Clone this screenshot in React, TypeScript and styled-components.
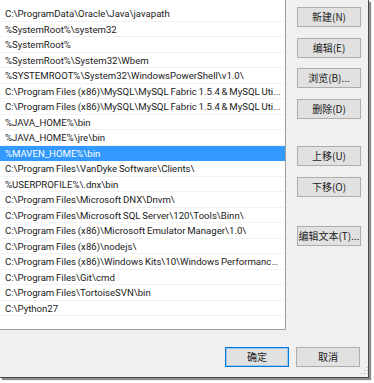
import React from "react";
import styled, { createGlobalStyle } from "styled-components";

const GlobalStyle = createGlobalStyle`
  html, body {
    margin: 0;
    padding: 0;
    background: #ffffff;
  }
  body {
    width: 374px;
    height: 383px;
    overflow: hidden;
    font-family: Roboto, "Noto Sans CJK SC", sans-serif;
  }
`;

const Dialog = styled.div`
  display: flex;
  flex-direction: column;
  width: 369px;
  height: 378px;
  box-sizing: border-box;
  background: #f0f0f0;
  border-right: 1px solid #4a4a4a;
  border-bottom: 1px solid #4a4a4a;
  box-shadow: 2px 2px 1px rgba(0, 0, 0, 0.45);
`;

const Main = styled.div`
  display: flex;
  flex-direction: row;
`;

const PathList = styled.div`
  width: 286px;
  height: 330px;
  box-sizing: border-box;
  background: #ffffff;
  border-right: 1px solid #a0a0a0;
  border-bottom: 1px solid #a0a0a0;
  padding-top: 6px;
  overflow: hidden;
`;

const Row = styled.div<{ $selected?: boolean }>`
  height: 15.5px;
  line-height: 15px;
  box-sizing: border-box;
  padding: 0 3px 0 5px;
  font-family: Roboto, "Noto Sans", sans-serif;
  font-size: 9.6px;
  word-spacing: -0.6px;
  color: ${(p) => (p.$selected ? "#ffffff" : "#1a1a1a")};
  background: ${(p) => (p.$selected ? "#3399ff" : "transparent")};
  border-bottom: 1px solid ${(p) => (p.$selected ? "#3399ff" : "#f3f3f3")};
  white-space: nowrap;
  overflow: hidden;
  text-overflow: ellipsis;
`;

const ButtonColumn = styled.div`
  display: flex;
  flex-direction: column;
  padding: 7px 0 0 11px;
`;

const Button = styled.button<{ $gap?: number; $default?: boolean }>`
  width: 64px;
  height: 20px;
  margin-top: ${(p) => p.$gap ?? 0}px;
  padding: 0;
  box-sizing: border-box;
  background: #e1e1e1;
  border: 1px solid ${(p) => (p.$default ? "#0078d7" : "#adadad")};
  box-shadow: ${(p) => (p.$default ? "inset 0 0 0 1px #9cc7ee" : "none")};
  font-family: "Noto Sans CJK SC", "Noto Sans", sans-serif;
  font-size: 10px;
  line-height: 18px;
  white-space: nowrap;
  color: #1a1a1a;
`;

const Footer = styled.div`
  display: flex;
  flex-direction: row;
  justify-content: flex-end;
  gap: 7px;
  padding: 17px 8px 0 0;
`;

const Grip = styled.div`
  position: absolute;
  left: 360px;
  top: 366px;
  width: 8px;
  height: 8px;
  background: radial-gradient(circle, #b5b5b5 0.8px, transparent 1px) 0 0 / 3px 3px;
  clip-path: polygon(100% 0, 100% 100%, 0 100%);
`;

const paths = [
  "C:\\ProgramData\\Oracle\\Java\\javapath",
  "%SystemRoot%\\system32",
  "%SystemRoot%",
  "%SystemRoot%\\System32\\Wbem",
  "%SYSTEMROOT%\\System32\\WindowsPowerShell\\v1.0\\",
  "C:\\Program Files (x86)\\MySQL\\MySQL Fabric 1.5.4 & MySQL Uti...",
  "C:\\Program Files (x86)\\MySQL\\MySQL Fabric 1.5.4 & MySQL Uti...",
  "%JAVA_HOME%\\bin",
  "%JAVA_HOME%\\jre\\bin",
  "%MAVEN_HOME%\\bin",
  "C:\\Program Files\\VanDyke Software\\Clients\\",
  "%USERPROFILE%\\.dnx\\bin",
  "C:\\Program Files\\Microsoft DNX\\Dnvm\\",
  "C:\\Program Files\\Microsoft SQL Server\\120\\Tools\\Binn\\",
  "C:\\Program Files (x86)\\Microsoft Emulator Manager\\1.0\\",
  "C:\\Program Files (x86)\\nodejs\\",
  "C:\\Program Files (x86)\\Windows Kits\\10\\Windows Performance ...",
  "C:\\Program Files\\Git\\cmd",
  "C:\\Program Files\\TortoiseSVN\\bin",
  "C:\\Python27",
];

const sideButtons = [
  { label: "新建(N)", gap: 0 },
  { label: "编辑(E)", gap: 11 },
  { label: "浏览(B)...", gap: 10 },
  { label: "删除(D)", gap: 11 },
  { label: "上移(U)", gap: 27 },
  { label: "下移(O)", gap: 11 },
  { label: "编辑文本(T)...", gap: 29 },
];

const App: React.FC = () => {
  return (
    <>
      <GlobalStyle />
      <Dialog>
        <Main>
          <PathList>
            {paths.map((p, i) => (
              <Row key={i} $selected={i === 9}>
                {p}
              </Row>
            ))}
          </PathList>
          <ButtonColumn>
            {sideButtons.map((b) => (
              <Button key={b.label} $gap={b.gap}>
                {b.label}
              </Button>
            ))}
          </ButtonColumn>
        </Main>
        <Footer>
          <Button $default>确定</Button>
          <Button>取消</Button>
        </Footer>
      </Dialog>
      <Grip />
    </>
  );
};

export default App;
